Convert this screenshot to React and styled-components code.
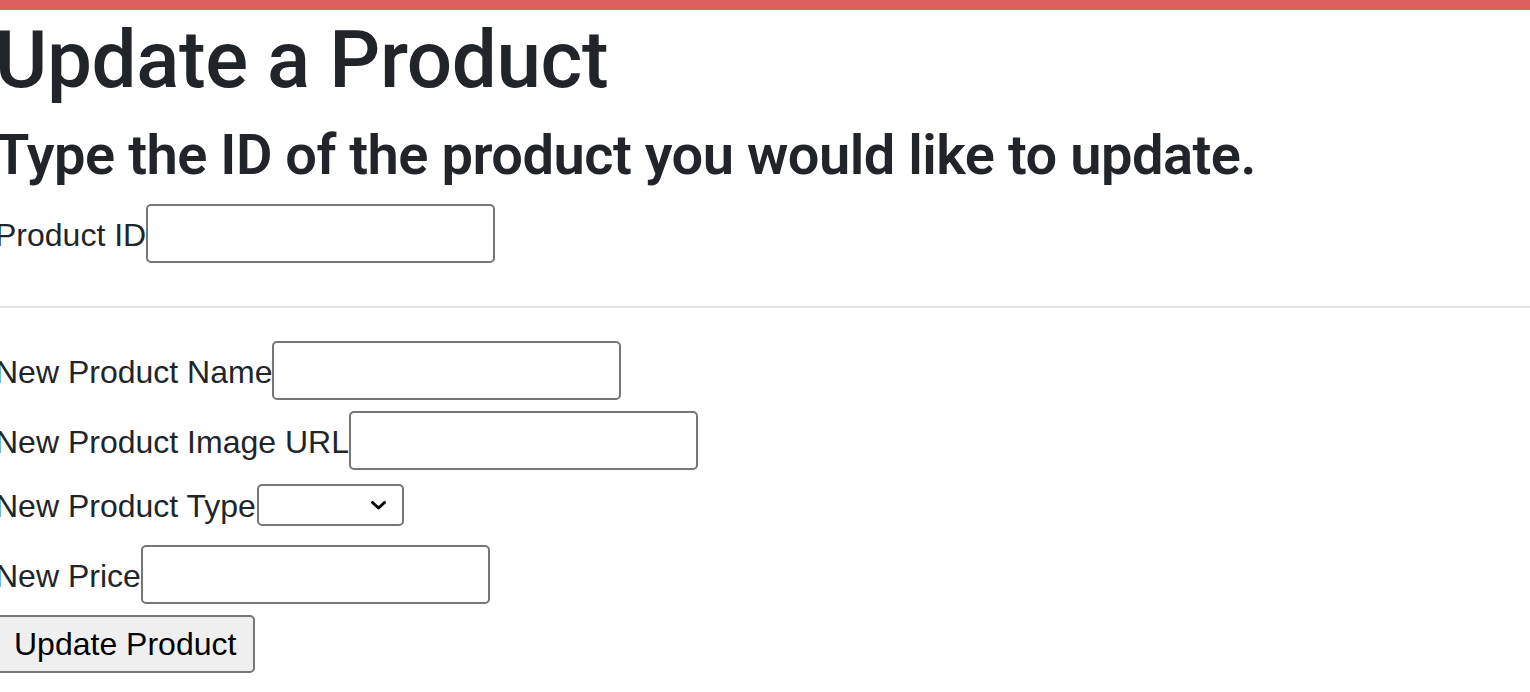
import React, { useState } from 'react';
import styled, { createGlobalStyle } from 'styled-components';

// style
const GlobalStyle = createGlobalStyle`
  html, body {
    margin: 0;
    padding: 0;
    background: #ffffff;
    overflow: hidden;
  }
  body {
    font-family: "Liberation Sans", Arial, sans-serif;
    color: #212529;
  }
`;

const TopBar = styled.div`
  height: 10px;
  background: #dc5f5a;
`;

const Container = styled.div`
  margin-left: -5px;
`;

const Title = styled.h1`
  margin: 2px 0 14px;
  font-family: Roboto, "Liberation Sans", sans-serif;
  font-size: 80px;
  font-weight: 500;
  line-height: 1.2;
  letter-spacing: -0.4px;
`;

const SubTitle = styled.h2`
  margin: 0;
  font-family: Roboto, "Liberation Sans", sans-serif;
  font-size: 56px;
  font-weight: 600;
  line-height: 1.2;
  letter-spacing: -0.5px;
`;

const Row = styled.div`
  display: flex;
  align-items: center;
  height: ${({ $height }) => $height || 59}px;
  margin-top: ${({ $mt }) => $mt || 0}px;
`;

const Label = styled.label`
  padding-top: 2px;
  font-size: 32px;
  line-height: 1.5;
  white-space: nowrap;
`;

const TextInput = styled.input`
  box-sizing: border-box;
  width: 349px;
  height: 59px;
  margin: 0;
  padding: 2px 4px;
  border: 2px solid #767676;
  border-radius: 5px;
  font: inherit;
  font-size: 32px;
  background: #fff;
  outline: none;
`;

const SelectWrap = styled.div`
  position: relative;
  display: inline-block;
`;

const Select = styled.select`
  box-sizing: border-box;
  width: 147px;
  height: 42px;
  margin: 0 0 0 1px;
  padding: 0 40px 0 8px;
  border: 2px solid #767676;
  border-radius: 5px;
  background: #fff;
  font-size: 28px;
  appearance: none;
  -webkit-appearance: none;
  outline: none;
`;

const Chevron = styled.svg`
  position: absolute;
  right: 18px;
  top: 17px;
  width: 15px;
  height: 9px;
  pointer-events: none;
`;

const Divider = styled.hr`
  margin: 43px 0 0;
  border: 0;
  border-top: 2px solid #e3e3e3;
`;

const SubmitButton = styled.button`
  box-sizing: border-box;
  height: 58px;
  margin: 0;
  padding: 2px 17px;
  border: 2px solid #767676;
  border-radius: 5px;
  background: #efefef;
  color: #000;
  font-family: "Liberation Sans", Arial, sans-serif;
  font-size: 32px;
  cursor: pointer;
`;

export default function App() {
  const [form, setForm] = useState({ id: '', name: '', image: '', type: '', price: '' });
  const update = (key) => (e) => setForm({ ...form, [key]: e.target.value });

  return (
    <>
      <GlobalStyle />
      <TopBar />
      <Container>
        <Title>Update a Product</Title>
        <SubTitle>Type the ID of the product you would like to update.</SubTitle>
        <Row $mt={15}>
          <Label htmlFor="pid">Product ID</Label>
          <TextInput id="pid" value={form.id} onChange={update('id')} />
        </Row>
        <Divider />
        <Row $mt={33}>
          <Label htmlFor="pname">New Product Name</Label>
          <TextInput id="pname" value={form.name} onChange={update('name')} />
        </Row>
        <Row $mt={11}>
          <Label htmlFor="pimg">New Product Image URL</Label>
          <TextInput id="pimg" value={form.image} onChange={update('image')} />
        </Row>
        <Row $mt={5} $height={59}>
          <Label htmlFor="ptype">New Product Type</Label>
          <SelectWrap>
            <Select id="ptype" value={form.type} onChange={update('type')}>
              <option value=""></option>
            </Select>
            <Chevron viewBox="0 0 15 9">
              <path d="M1.5 1.5 L7.5 7 L13.5 1.5" fill="none" stroke="#000" strokeWidth="3" strokeLinecap="round" strokeLinejoin="round" />
            </Chevron>
          </SelectWrap>
        </Row>
        <Row $mt={11}>
          <Label htmlFor="pprice">New Price</Label>
          <TextInput id="pprice" value={form.price} onChange={update('price')} />
        </Row>
        <Row $mt={11} $height={58}>
          <SubmitButton type="button">Update Product</SubmitButton>
        </Row>
      </Container>
    </>
  );
}
